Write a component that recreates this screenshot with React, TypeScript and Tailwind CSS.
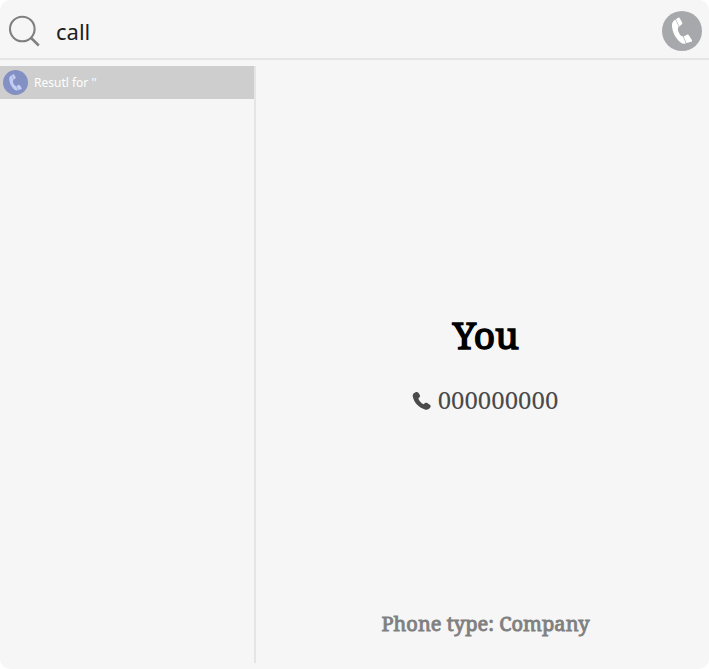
function Handset({ className }: { className: string }) {
  return (
    <svg viewBox="0 0 40 40" className={className} fill="currentColor" aria-hidden="true">
      <path d="M13.4 8.5 16.8 15.8C15.5 17 15.6 18.8 16.6 21.1C17.6 23.6 19 25.5 20.9 25.6L23.8 32.2C21.4 33.7 18.7 32.1 16.4 29.6C12.6 25.3 10.3 20.3 10 15.3C9.8 12 10.8 9.8 13.4 8.5Z" />
      <path d="M13.9 8.2 16.2 6.8C17 6.4 17.5 6.7 17.9 7.4L20.1 11.3C20.6 12.2 20.3 12.9 19.6 13.5L17.3 15.5Z" />
      <path d="M21.5 25.4 24.9 23.8C25.8 23.4 26.5 23.7 27 24.5L29.8 28.8C30.3 29.6 30.1 30.4 29.3 30.8L24.4 32.1Z" />
    </svg>
  );
}

export default function App() {
  return (
    <div className="h-[669px] w-[709px] bg-white">
      <main className="flex h-full flex-col overflow-hidden rounded-[10px] bg-[#f6f6f6] font-['Noto_Sans',sans-serif]">
        <header className="flex h-[60px] shrink-0 items-center border-b-2 border-[#e5e5e5] pr-[7px] pl-2 pt-1">
          <svg viewBox="0 0 34 34" className="h-[34px] w-[34px] shrink-0 text-[#808080]" fill="none" stroke="currentColor" strokeWidth="2.1">
            <circle cx="14.3" cy="15" r="12.3" />
            <path d="m22.6 23.5 8.2 8" strokeWidth="2.5" />
          </svg>
          <div className="ml-3.5 grow text-[22px] leading-[30px] text-[#202020]">call</div>
          <div className="h-10 w-10 rounded-full bg-[#a7a8ab] text-white">
            <Handset className="h-10 w-10" />
          </div>
        </header>
        <div className="mt-1.5 mb-1.5 flex min-h-0 grow">
          <aside className="w-64 shrink-0 border-r-2 border-[#e5e5e5]">
            <div className="flex h-[33px] items-center bg-[#cecece] pl-[3px]">
              <div className="h-[25px] w-[25px] rounded-full bg-[#8390c3] text-[#c3cdf4]">
                <Handset className="h-[25px] w-[25px]" />
              </div>
              <span className="ml-1.5 text-[12px] text-white">Resutl for ''</span>
            </div>
          </aside>
          <section className="flex grow flex-col items-center pl-[5px] font-['Noto_Serif','DejaVu_Serif_Condensed','DejaVu_Serif',serif]">
            <h1 className="mt-[243px] pl-0.5 text-[37px] leading-[52px] font-normal tracking-[0.3px] text-black [-webkit-text-stroke:1.6px_black]">You</h1>
            <div className="mt-[22px] flex items-center text-[24px] leading-[34px] text-[#4a4a4a]">
              <svg viewBox="0 0 20 20" className="mt-0.5 mr-1.5 h-5 w-5" fill="currentColor" aria-hidden="true">
                <path d="M3.5 1.3C4.7.7 5.7.9 6.4 1.8L7.8 4.1C8.3 5 8 5.9 7.3 6.5L6.3 7.4C7.2 9.8 9.1 11.9 11.4 13.2L12.8 12.3C13.6 11.7 14.4 11.7 15.2 12.1L17.8 13.8C18.7 14.4 18.9 15.3 18.4 16.2C17.2 18.2 15.3 19.1 12.9 18.5C6.6 16.7 2 11.4.7 5.3C.4 3.5 1.8 2 3.5 1.3Z" />
              </svg>
              <span>000000000</span>
            </div>
            <p className="mt-[190px] pl-px text-[20px] leading-[34px] font-normal tracking-[0.03px] text-[#808080] [-webkit-text-stroke:0.9px_#808080]">Phone type: Company</p>
          </section>
        </div>
      </main>
    </div>
  );
}
